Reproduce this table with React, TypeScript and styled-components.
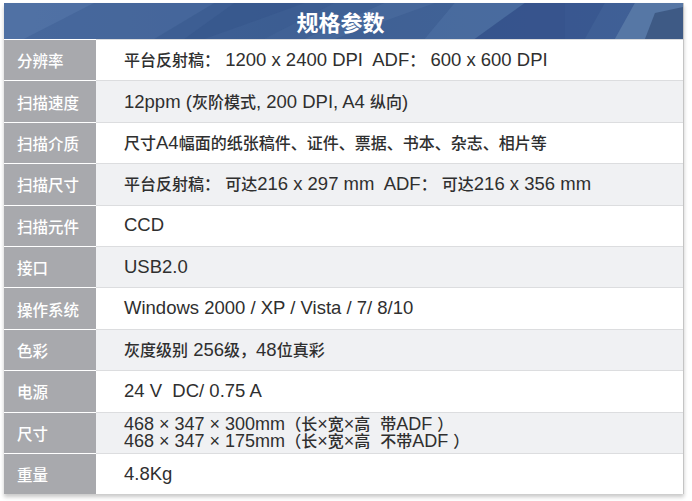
import React from "react";
import styled, { createGlobalStyle } from "styled-components";

const GlobalStyle = createGlobalStyle`
    body {
        margin: 0;
        background: #ffffff;
        font-family: "Liberation Sans", "Noto Sans CJK SC", sans-serif;
    }
`;

interface ISpec {
    label: string;
    lines: string[];
}

const specs: ISpec[] = [
    { label: "分辨率", lines: ["平台反射稿： 1200 x 2400 DPI  ADF： 600 x 600 DPI"] },
    { label: "扫描速度", lines: ["12ppm (灰阶模式, 200 DPI, A4 纵向)"] },
    { label: "扫描介质", lines: ["尺寸A4幅面的纸张稿件、证件、票据、书本、杂志、相片等"] },
    { label: "扫描尺寸", lines: ["平台反射稿： 可达216 x 297 mm  ADF： 可达216 x 356 mm"] },
    { label: "扫描元件", lines: ["CCD"] },
    { label: "接口", lines: ["USB2.0"] },
    { label: "操作系统", lines: ["Windows 2000 / XP / Vista / 7/ 8/10"] },
    { label: "色彩", lines: ["灰度级别 256级，48位真彩"] },
    { label: "电源", lines: ["24 V  DC/ 0.75 A"] },
    {
        label: "尺寸",
        lines: ["468 × 347 × 300mm（长×宽×高  带ADF ）", "468 × 347 × 175mm（长×宽×高  不带ADF ）"],
    },
    { label: "重量", lines: ["4.8Kg"] },
];

// latin runs are set a bit larger than the CJK runs, like the original artwork
const splitRuns = (text: string) =>
    text.split(/([\u3000-\u9fff\uff00-\uffef]+)/).filter((t) => t.length > 0);

const isCjk = (t: string) => /[\u3000-\u9fff\uff00-\uffef]/.test(t);

const HeaderArt = () => (
    <Art viewBox="0 0 678 36" preserveAspectRatio="none">
        <defs>
            <linearGradient id="hdr" x1="0" y1="0" x2="1" y2="0">
                <stop offset="0" stopColor="#4b6c9f" />
                <stop offset="0.5" stopColor="#3f6196" />
                <stop offset="1" stopColor="#4a6a9c" />
            </linearGradient>
        </defs>
        <rect x="0" y="0" width="678" height="36" fill="url(#hdr)" />
        <polygon points="0,0 90,0 20,36 0,36" fill="#5374a6" opacity="0.7" />
        <polygon points="90,0 210,0 150,36 20,36" fill="#46679b" opacity="0.7" />
        <polygon points="210,0 330,0 260,36 150,36" fill="#3a5b90" opacity="0.7" />
        <polygon points="230,0 300,0 200,36 180,36" fill="#33538a" opacity="0.5" />
        <polygon points="330,0 450,0 420,36 260,36" fill="#3f6195" opacity="0.6" />
        <polygon points="450,0 520,0 470,36 420,36" fill="#4c6ea1" opacity="0.7" />
        <polygon points="520,0 600,0 580,36 470,36" fill="#33508a" opacity="0.8" />
        <polygon points="560,0 630,0 610,36 560,36" fill="#3a5a92" opacity="0.6" />
        <polygon points="630,0 678,0 678,36 610,36" fill="#5a7aa8" opacity="0.8" />
        <polygon points="650,10 678,4 678,36 640,36" fill="#3e5a85" />
        <polygon points="380,0 430,0 330,36 300,36" fill="#5273a6" opacity="0.4" />
    </Art>
);

const App = () => {
    return (
        <>
            <GlobalStyle />
            <Page>
                <Table>
                    <Header>
                        <HeaderArt />
                        <Title>规格参数</Title>
                    </Header>
                    {specs.map((s, i) => {
                        const multi = s.lines.length > 1;
                        return (
                            <Row key={s.label} $shaded={i % 2 === 1}>
                                <Label>{s.label}</Label>
                                <Value $multi={multi}>
                                    {s.lines.map((l) => (
                                        <Line key={l} $multi={multi}>
                                            {splitRuns(l).map((r, j) =>
                                                isCjk(r) ? (
                                                    <Cjk key={j} $multi={multi}>{r}</Cjk>
                                                ) : (
                                                    <Latin key={j} $multi={multi}>{r}</Latin>
                                                )
                                            )}
                                        </Line>
                                    ))}
                                </Value>
                            </Row>
                        );
                    })}
                </Table>
            </Page>
        </>
    );
};

export default App;

const Page = styled.div`
    padding: 3px 0 0 4px;
    width: 692px;
    height: 501px;
    box-sizing: border-box;
`;

const Table = styled.div`
    width: 679px;
    display: flex;
    flex-direction: column;
    border-right: 1px solid #c4c4c4;
    box-shadow: 0 3px 4px rgba(0, 0, 0, 0.22);
`;

const Header = styled.div`
    position: relative;
    height: 36px;
    display: flex;
    align-items: center;
    justify-content: center;
    overflow: hidden;
`;

const Art = styled.svg`
    position: absolute;
    inset: 0;
    width: 100%;
    height: 100%;
`;

const Title = styled.div`
    position: relative;
    color: #ffffff;
    font-family: "Noto Sans CJK SC", sans-serif;
    font-weight: 700;
    font-size: 22px;
    margin-top: -1px;
    margin-right: 6px;
`;

const Row = styled.div<{ $shaded: boolean }>`
    display: grid;
    grid-template-columns: 92px 1fr;
    height: 41.4px;
    background: ${(p) => (p.$shaded ? "#f0f1f3" : "#ffffff")};
    border-top: 1px solid #dcdddf;
    box-sizing: border-box;
`;

const Label = styled.div`
    display: flex;
    align-items: center;
    padding-left: 13px;
    background: #a8a9ad;
    color: #ffffff;
    font-family: "Noto Sans CJK SC", sans-serif;
    font-weight: 500;
    font-size: 15.5px;
    border-top: 1px solid #ffffff;
    margin-top: -1px;
`;

const Value = styled.div<{ $multi: boolean }>`
    display: flex;
    flex-direction: column;
    justify-content: center;
    padding-left: 28px;
    padding-bottom: ${(p) => (p.$multi ? "1px" : "0")};
    color: #2f2f2f;
    white-space: pre;
`;

const Line = styled.div<{ $multi: boolean }>`
    height: ${(p) => (p.$multi ? "17px" : "auto")};
    line-height: ${(p) => (p.$multi ? "17px" : "20px")};
`;

const Cjk = styled.span<{ $multi: boolean }>`
    font-family: "Noto Sans CJK SC", sans-serif;
    font-weight: 500;
    font-size: 16px;
    line-height: inherit;
`;

const Latin = styled.span<{ $multi: boolean }>`
    font-family: "Liberation Sans", sans-serif;
    font-size: ${(p) => (p.$multi ? "18px" : "18.5px")};
    line-height: inherit;
`;
